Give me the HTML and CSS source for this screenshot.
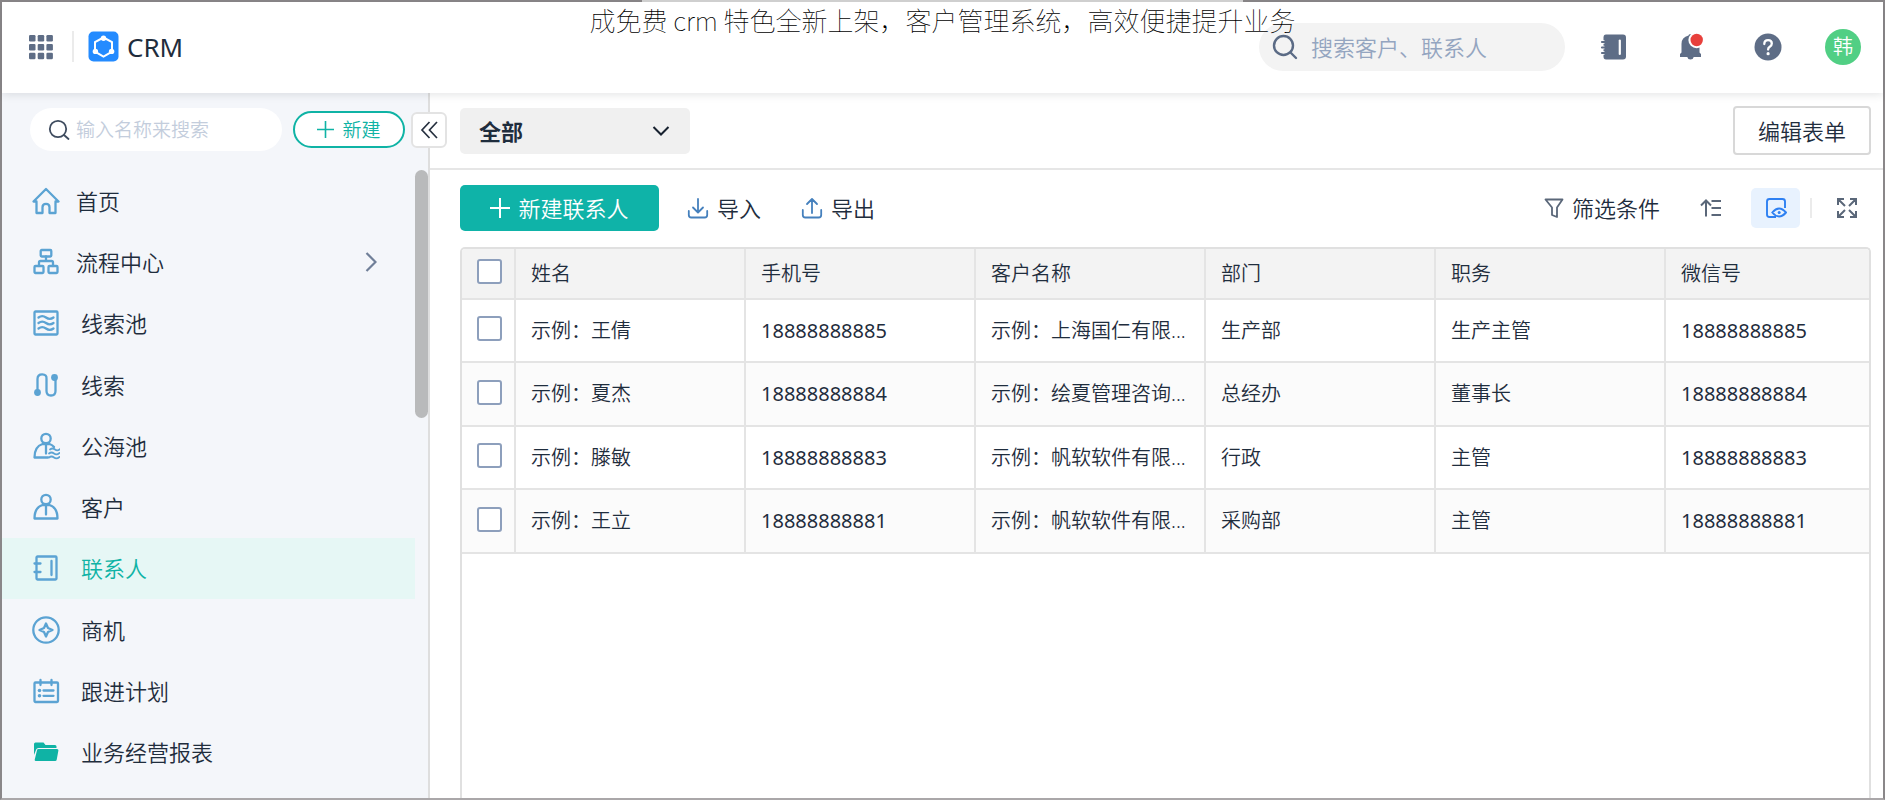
FILE: index.html
```html
<!DOCTYPE html>
<html lang="zh-CN">
<head>
<meta charset="utf-8">
<title>CRM</title>
<link rel="stylesheet" href="styles.css">
</head>
<body>
<div class="app">
  <h1 class="caption">成免费 crm 特色全新上架，客户管理系统，高效便捷提升业务</h1>
  <header class="topbar">
    <button class="icon-btn apps" aria-label="应用">
      <svg width="26" height="26" viewBox="0 0 26 26" fill="#5e6d86"><rect x="1" y="1" width="6.500" height="6.500" rx="1.200"/><rect x="9.700" y="1" width="6.500" height="6.500" rx="1.200"/><rect x="18.400" y="1" width="6.500" height="6.500" rx="1.200"/><rect x="1" y="9.900" width="6.500" height="6.500" rx="1.200"/><rect x="9.700" y="9.900" width="6.500" height="6.500" rx="1.200"/><rect x="18.400" y="9.900" width="6.500" height="6.500" rx="1.200"/><rect x="1" y="18.800" width="6.500" height="6.500" rx="1.200"/><rect x="9.700" y="18.800" width="6.500" height="6.500" rx="1.200"/><rect x="18.400" y="18.800" width="6.500" height="6.500" rx="1.200"/></svg>
    </button>
    <span class="rule"></span>
    <a class="brand" href="#">
      <svg width="31" height="31" viewBox="0 0 31 31"><rect x=".5" y=".5" width="30" height="30" rx="5" fill="#248bff"/><path d="M15.500 6.500l8.500 4.600v9.600l-8.500 4.800L7 20.700v-9.600z" fill="none" stroke="#fff" stroke-width="2"/><g fill="#fff"><circle cx="15.500" cy="7.200" r="2.700"/><circle cx="7.400" cy="20.400" r="2.700"/><circle cx="23.600" cy="20.400" r="2.700"/></g></svg>
      <span>CRM</span>
    </a>
    <label class="global-search">
      <svg width="26" height="26" viewBox="0 0 26 26" fill="none" stroke="#5b6b85" stroke-width="2.400" stroke-linecap="round"><circle cx="11.500" cy="11.500" r="9.500"/><path d="M18.500 18.500l5.500 5.500"/></svg>
      <input type="text" placeholder="搜索客户、联系人" aria-label="搜索客户、联系人">
    </label>
    <nav class="top-actions">
      <button class="icon-btn" aria-label="通讯录">
        <svg width="28" height="28" viewBox="0 0 28 28"><path d="M6 1.500h17q3 0 3 3v19q0 3-3 3H6q-2.500 0-2.500-3v-19q0-3 2.500-3z" fill="#5e6d86"/><path d="M1.500 9h3M1.500 14.500h3M1.500 20h3" stroke="#fff" stroke-width="3.600"/><path d="M2 9h4M2 14.500h4M2 20h4" stroke="#5e6d86" stroke-width="2.200" stroke-linecap="round"/><path d="M19.800 7.500v13.500" stroke="#fff" stroke-width="2.200" stroke-linecap="round"/></svg>
      </button>
      <button class="icon-btn" aria-label="通知">
        <svg width="28" height="28" viewBox="0 0 28 28"><path d="M13.500 1q2 0 2 1.600 7 1.600 7 8.400v8.500l1.500 1.500v3h-7.300q-.5 2.500-3.200 2.500T10.300 24H3v-3l1.500-1.500V11q0-6.800 7-8.400Q11.500 1 13.500 1z" fill="#5e6d86"/><circle cx="19.700" cy="7" r="8.300" fill="#fff"/><circle cx="19.700" cy="7" r="6.200" fill="#e8403c"/></svg>
      </button>
      <button class="icon-btn" aria-label="帮助">
        <svg width="28" height="28" viewBox="0 0 28 28"><circle cx="14" cy="14" r="13.500" fill="#5e6d86"/><path d="M10.300 11q0-3.900 3.800-3.900 3.700 0 3.700 3.400 0 2-2 3.200-1.700 1-1.700 2.800" fill="none" stroke="#fff" stroke-width="2.300" stroke-linecap="round"/><circle cx="14.100" cy="20.700" r="1.600" fill="#fff"/></svg>
      </button>
      <button class="avatar">韩</button>
    </nav>
  </header>

  <div class="body">
    <aside class="sidebar">
      <div class="side-tools">
        <label class="side-search">
          <svg width="22" height="22" viewBox="0 0 22 22" fill="none" stroke="#3f4c5f" stroke-width="1.800" stroke-linecap="round"><circle cx="10" cy="10" r="8.200"/><path d="M16 16l4.500 4"/></svg>
          <input type="text" placeholder="输入名称来搜索" aria-label="输入名称来搜索">
        </label>
        <button class="new-pill">
          <svg width="17" height="17" viewBox="0 0 17 17" stroke="#0fb3a5" stroke-width="1.600"><path d="M8.500 0v17M0 8.500h17"/></svg>
          <span>新建</span>
        </button>
        <button class="collapse" aria-label="收起">
          <svg width="18" height="18" viewBox="0 0 18 18" fill="none" stroke="#26303f" stroke-width="1.700"><path d="M9.500 1L2 9l7.500 8M17 1L9.500 9l7.500 8"/></svg>
        </button>
      </div>
      <div class="side-scroll">
        <nav class="menu">
          <a class="item top" href="#"><svg class="mi" viewBox="0 0 28 28"><path d="M1.500 14.500L14 2l12.500 12.500h-3v11.500h-6v-5.700q0-3.500-3.500-3.500t-3.500 3.500v5.700h-6V14.500z"/></svg><span>首页</span></a>
          <a class="item top" href="#"><svg class="mi" viewBox="0 0 28 28"><rect x="8.700" y="2" width="10.600" height="6.500" rx="1"/><rect x="2.500" y="18" width="9" height="7" rx="1"/><rect x="16.500" y="18" width="9" height="7" rx="1"/><path d="M14 8.500V13M7 18v-3.500q0-1.500 1.500-1.500h11q1.500 0 1.500 1.500V18"/></svg><span>流程中心</span><svg class="more" width="12" height="22" viewBox="0 0 12 22"><path d="M1.500 2l9 9-9 9"/></svg></a>
          <a class="item" href="#"><svg class="mi" viewBox="0 0 28 28"><rect x="2.500" y="2.500" width="23" height="23" rx="1"/><path d="M6.500 8.500q3.700-2.800 7.500 0t7.500 0M6.500 14q3.700-2.800 7.500 0t7.500 0M6.500 19.500q3.700-2.800 7.500 0t7.500 0"/></svg><span>线索池</span></a>
          <a class="item" href="#"><svg class="mi" viewBox="0 0 28 28"><path d="M5.500 20V8q0-4.700 4.700-4.700T14.500 8v12q0 4.500 4.500 4.500t4.500-4.500V8"/><circle class="dot" cx="5.500" cy="21.500" r="3.400"/><circle class="dot" cx="22.500" cy="6.500" r="3.400"/></svg><span>线索</span></a>
          <a class="item" href="#"><svg class="mi" viewBox="0 0 28 28"><circle cx="14" cy="6.500" r="4.700"/><path d="M16 25.500H2.500q0-11 8-13.500h7q3 1 4.500 3M14 13v8.500"/><path class="thin" d="M18 17.500q2.500-2 5 0t5-.5M17 21.500q2.500-2 5 0t5.500-.5M17 25.500q2.500-2 5 0t5.500-.5"/></svg><span>公海池</span></a>
          <a class="item" href="#"><svg class="mi" viewBox="0 0 28 28"><circle cx="14" cy="6.500" r="4.700"/><path d="M10.500 12q-8 2.500-8 13.500h23q0-11-8-13.500zM14 13v8.500"/></svg><span>客户</span></a>
          <a class="item active" href="#" aria-current="page"><svg class="mi" viewBox="0 0 28 28"><rect x="4.500" y="2.500" width="20" height="23" rx="1"/><path d="M2.500 9.500h6M2.500 18h6M19.500 7v14"/></svg><span>联系人</span></a>
          <a class="item" href="#"><svg class="mi" viewBox="0 0 28 28"><circle cx="14" cy="14" r="12.700"/><path d="M14 7.500l2 4.500 4.500 2-4.500 2-2 4.500-2-4.500-4.500-2 4.500-2z"/></svg><span>商机</span></a>
          <a class="item" href="#"><svg class="mi" viewBox="0 0 28 28"><rect x="2.500" y="5.500" width="23.500" height="19.500" rx="1"/><path d="M8.500 3v5M19.500 3v5M11.500 13.500h10M11.500 18.800h10"/><circle class="dot" cx="7.500" cy="13.500" r="1.800"/><circle class="dot" cx="7.500" cy="18.800" r="1.800"/></svg><span>跟进计划</span></a>
          <a class="item" href="#"><svg class="mi folder" viewBox="0 0 28 28"><path d="M2 17V6q0-1.500 1.500-1.500h8l2 2.500H23q1.500 0 1.500 1.500V10H6.500Q4.600 10 4.200 11.500z"/><path d="M6.500 11h18.500q1.600 0 1.400 1.500l-1.700 9.200q-.2 1.300-1.600 1.300H4q-1.500 0-1.300-1.300L5 12.300Q5.200 11 6.500 11z"/></svg><span>业务经营报表</span></a>
        </nav>
        <div class="track"><div class="thumb"></div></div>
      </div>
    </aside>

    <main class="main">
      <div class="viewbar">
        <span class="view-select">
          <select aria-label="视图"><option>全部</option></select>
          <svg width="18" height="12" viewBox="0 0 18 12" fill="none" stroke="#17212f" stroke-width="2"><path d="M1.500 2L9 9.500 16.500 2"/></svg>
        </span>
        <button class="edit">编辑表单</button>
      </div>
      <div class="toolbar">
        <button class="primary">
          <svg width="20" height="20" viewBox="0 0 20 20" stroke="#fff" stroke-width="2"><path d="M10 0v20M0 10h20"/></svg>
          <span>新建联系人</span>
        </button>
        <button class="tool import">
          <svg width="22" height="22" viewBox="0 0 22 22" fill="none" stroke="#4580bd" stroke-width="1.800" stroke-linecap="round" stroke-linejoin="round"><path d="M11 2v13M6 10.500l5 5 5-5M1.800 14v4q0 2.500 2.500 2.500h13.400q2.500 0 2.500-2.500v-4"/></svg>
          <span>导入</span>
        </button>
        <button class="tool export">
          <svg width="22" height="22" viewBox="0 0 22 22" fill="none" stroke="#4580bd" stroke-width="1.800" stroke-linecap="round" stroke-linejoin="round"><path d="M11 16V2.500M6 7l5-5 5 5M1.800 13v5q0 2.500 2.500 2.500h13.400q2.500 0 2.500-2.500v-5"/></svg>
          <span>导出</span>
        </button>
        <div class="tools-right">
          <button class="tool">
            <svg width="20" height="22" viewBox="0 0 20 22" fill="none" stroke="#5a6779" stroke-width="1.800" stroke-linejoin="round"><path d="M1.500 2.500h17l-5.500 8v9.500l-5-2v-7.500z"/></svg>
            <span>筛选条件</span>
          </button>
          <button class="icon-btn sort" aria-label="排序">
            <svg width="22" height="22" viewBox="0 0 22 22" fill="none" stroke="#5a6779" stroke-width="2"><path d="M6 19.500V4M1 8.500l5-5 5 5M11.500 4H21M11.500 11H21M11.500 18H21"/></svg>
          </button>
          <button class="icon-btn preview" aria-label="预览">
            <svg width="22" height="22" viewBox="0 0 22 22" fill="none" stroke="#2e80f2" stroke-width="1.900"><path d="M11 20H4.500q-2.500 0-2.500-2.500V4.500Q2 2 4.500 2h13Q20 2 20 4.500v6.500"/><path d="M7.300 15.500q6.700-8 13.700 0-7 8-13.700 0z"/><circle cx="14.200" cy="15.500" r="1.500" fill="#2e80f2" stroke="none"/></svg>
          </button>
          <span class="rule short"></span>
          <button class="icon-btn expand" aria-label="全屏">
            <svg width="22" height="22" viewBox="0 0 22 22" fill="none" stroke="#5a6779" stroke-width="2"><path d="M2 8V2h6M2 2l7 7M14 2h6v6M20 2l-7 7M2 14v6h6M2 20l7-7M20 14v6h-6M20 20l-7-7"/></svg>
          </button>
        </div>
      </div>
      <div class="grid">
        <table>
          <colgroup><col class="c-check"><col class="c"><col class="c"><col class="c"><col class="c"><col class="c"><col></colgroup>
          <thead>
            <tr><th><input type="checkbox" aria-label="全选"></th><th>姓名</th><th>手机号</th><th>客户名称</th><th>部门</th><th>职务</th><th>微信号</th></tr>
          </thead>
          <tbody>
            <tr><td><input type="checkbox" aria-label="选择王倩"></td><td>示例：王倩</td><td class="num">18888888885</td><td>示例：上海国仁有限...</td><td>生产部</td><td>生产主管</td><td class="num">18888888885</td></tr>
            <tr><td><input type="checkbox" aria-label="选择夏杰"></td><td>示例：夏杰</td><td class="num">18888888884</td><td>示例：绘夏管理咨询...</td><td>总经办</td><td>董事长</td><td class="num">18888888884</td></tr>
            <tr><td><input type="checkbox" aria-label="选择滕敏"></td><td>示例：滕敏</td><td class="num">18888888883</td><td>示例：帆软软件有限...</td><td>行政</td><td>主管</td><td class="num">18888888883</td></tr>
            <tr><td><input type="checkbox" aria-label="选择王立"></td><td>示例：王立</td><td class="num">18888888881</td><td>示例：帆软软件有限...</td><td>采购部</td><td>主管</td><td class="num">18888888881</td></tr>
          </tbody>
        </table>
      </div>
    </main>
  </div>
</div>
</body>
</html>
```

FILE: styles.css
```css
* { box-sizing: border-box; }

body {
  margin: 0;
  font-family: "Noto Sans", "Noto Sans CJK SC", sans-serif;
  font-size: 20px;
  line-height: 28px;
  font-weight: 350;
  color: #1f2d3d;
  background: #fff;
}

button, input, select { font: inherit; color: inherit; }
button { margin: 0; padding: 0; border: 0; background: none; cursor: pointer; }
a { color: inherit; text-decoration: none; }
svg { flex: none; display: block; }

.app {
  position: relative;
  display: flex;
  flex-direction: column;
  min-height: 100vh;
  border: 2px solid #8a8789;
  border-bottom-color: #aaa7a9;
}

.caption {
  position: absolute;
  top: 0;
  left: 0;
  right: 0;
  z-index: 3;
  margin: 0;
  text-align: center;
  font-family: "Noto Sans CJK SC", sans-serif;
  font-size: 26px;
  line-height: 36px;
  font-weight: 100;
  color: #000;
  pointer-events: none;
}
.caption::before {
  content: "";
  position: absolute;
  top: -2px;
  left: 34%;
  right: 34%;
  height: 2px;
  background: #cfcfcf;
}

.topbar {
  position: relative;
  z-index: 2;
  display: flex;
  align-items: center;
  height: 91px;
  padding: 0 22px 2px 26px;
  background: #fff;
  box-shadow: 0 2px 8px rgba(40, 50, 60, .12);
}
.icon-btn { display: flex; align-items: center; justify-content: center; }
.rule { width: 2px; height: 31px; background: #ebebeb; }
.apps { margin-right: 18px; }
.brand { display: flex; align-items: center; gap: 8px; margin-left: 14px; font-size: 26px; line-height: 36px; font-weight: 400; }

.global-search {
  display: flex;
  align-items: center;
  gap: 13px;
  width: 306px;
  height: 48px;
  margin-left: auto;
  padding: 0 13px;
  border-radius: 24px;
  background: #f3f3f3;
}
.global-search input, .side-search input {
  flex: 1;
  min-width: 0;
  padding: 0;
  border: 0;
  outline: 0;
  background: none;
}
.global-search input { font-size: 22px; line-height: 30px; }
.global-search input::placeholder { color: #94a5c0; }
.top-actions { display: flex; align-items: center; gap: 49px; margin-left: 35px; }
.avatar {
  width: 36px;
  height: 36px;
  margin-left: -6px;
  border-radius: 50%;
  background: #51cf84;
  color: #fff;
}

.body { display: flex; flex: 1; }

.sidebar {
  display: flex;
  flex-direction: column;
  width: 428px;
  flex: none;
  border-right: 2px solid #dedede;
  background: #f4f6fa;
}
.side-tools {
  display: flex;
  align-items: center;
  height: 77px;
  padding-left: 28px;
  padding-bottom: 4px;
}
.side-search {
  display: flex;
  align-items: center;
  gap: 6px;
  width: 252px;
  height: 43px;
  padding: 0 16px 0 18px;
  border-radius: 22px;
  background: #fff;
}
.side-search input { font-size: 19px; }
.side-search input::placeholder { color: #c3cddc; }
.new-pill {
  display: flex;
  align-items: center;
  justify-content: center;
  gap: 8px;
  width: 112px;
  height: 37px;
  margin-left: 11px;
  border: 2px solid #0fb3a5;
  border-radius: 19px;
  background: #fff;
  color: #0fb3a5;
  font-size: 19px;
  flex: none;
}
.collapse {
  position: relative;
  z-index: 1;
  display: flex;
  align-items: center;
  justify-content: center;
  width: 36px;
  height: 36px;
  flex: none;
  margin-left: 6px;
  border: 2px solid #e3e3e3;
  border-radius: 6px;
  background: #fff;
}
.side-scroll { display: flex; flex: 1; }
.menu { display: flex; flex: 1; flex-direction: column; padding-bottom: 15px; }
.item {
  display: flex;
  flex: 1 1 61px;
  align-items: center;
  gap: 21px;
  padding-left: 30px;
  font-size: 22px;
  line-height: 30px;
}
.item.top { gap: 16px; }
.item.active { background: #e6f7f5; color: #0fb3a5; }
.mi { width: 28px; height: 28px; fill: none; stroke: #5ba3d3; stroke-width: 2.3; stroke-linecap: round; stroke-linejoin: round; }
.mi .dot { fill: #5ba3d3; stroke: none; }
.mi .thin { stroke-width: 1.7; }
.mi.folder { fill: #0fb3a5; stroke: none; }
.more { margin: 0 38px 0 auto; fill: none; stroke: #707f98; stroke-width: 2.2; }
.track { width: 13px; }
.thumb { height: 248px; border-radius: 7px; background: #b9babb; }

.main { display: flex; flex: 1; flex-direction: column; min-width: 0; }
.viewbar {
  display: flex;
  align-items: center;
  justify-content: space-between;
  height: 77px;
  padding: 0 12px 0 30px;
  border-bottom: 2px solid #e6e6e6;
}
.view-select {
  position: relative;
  display: flex;
  width: 230px;
  height: 46px;
}
.view-select select {
  width: 100%;
  padding: 0 19px;
  border: 0;
  border-radius: 5px;
  appearance: none;
  background: #f0f0f0;
  font-size: 22px;
  font-weight: 700;
}
.view-select svg { position: absolute; right: 20px; top: 17px; pointer-events: none; }
.edit {
  width: 138px;
  height: 49px;
  border: 2px solid #d8d8d8;
  border-radius: 4px;
  background: #fff;
  font-size: 22px;
}

.toolbar { display: flex; align-items: center; height: 77px; padding: 0 12px 2px 30px; }
.primary {
  display: flex;
  align-items: center;
  justify-content: center;
  gap: 8px;
  width: 199px;
  height: 46px;
  border-radius: 5px;
  background: #0fb3a8;
  color: #fff;
  font-size: 22px;
}
.tool { display: flex; align-items: center; gap: 8px; font-size: 22px; line-height: 30px; }
.import { margin-left: 28px; }
.export { margin-left: 40px; }
.tools-right { display: flex; align-items: center; margin-left: auto; }
.sort { margin-left: 40px; }
.preview { width: 49px; height: 40px; margin: 0 10px 0 29px; border-radius: 5px; background: #e8f2fe; }
.rule.short { height: 20px; }
.expand { margin: 0 13px 0 24px; }

.grid {
  flex: 1;
  margin: 0 12px 0 30px;
  border: 2px solid #e0e0e0;
  border-bottom: 0;
  border-radius: 5px 5px 0 0;
  overflow: hidden;
}
table { width: 100%; table-layout: fixed; border-collapse: separate; border-spacing: 0; }
.c-check { width: 54px; }
.c { width: 230px; }
th, td {
  padding: 0 15px;
  border-right: 2px solid #e4e4e4;
  border-bottom: 2px solid #e4e4e4;
  text-align: left;
  font-weight: 350;
  white-space: nowrap;
  overflow: hidden;
  text-overflow: ellipsis;
}
th:last-child, td:last-child { border-right: 0; }
th { height: 51px; background: #f3f3f3; }
td { height: 63px; }
.num { font-weight: 400; }
tbody tr:nth-child(even) { background: #fbfbfb; }
tbody tr:nth-child(even) td { height: 64px; }
th:first-child, td:first-child { padding-bottom: 4px; }
input[type="checkbox"] {
  display: block;
  width: 25px;
  height: 25px;
  margin: 0;
  border: 2px solid #8d9fbc;
  border-radius: 3px;
  appearance: none;
  background: #fff;
}
```
